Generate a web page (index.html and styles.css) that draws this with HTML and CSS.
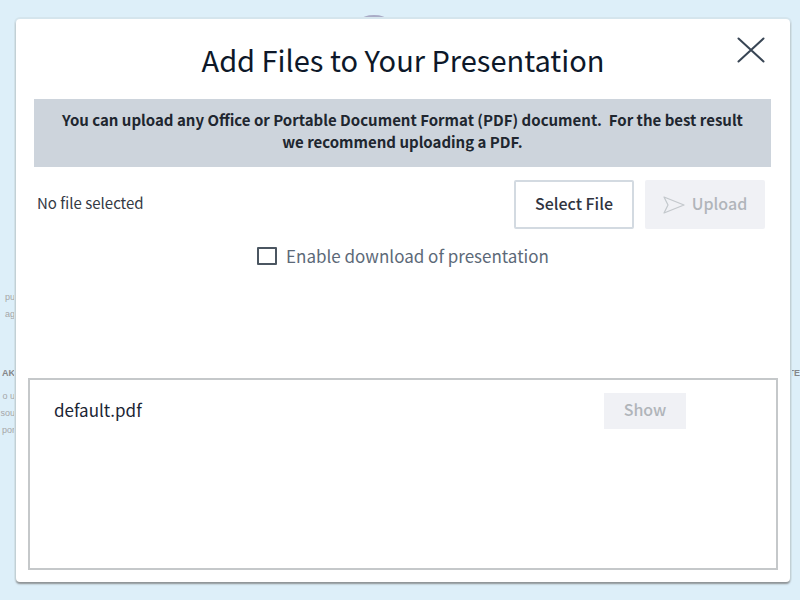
FILE: index.html
```
<!DOCTYPE html>
<html lang="en">
<head>
    <meta charset="utf-8">
    <meta name="viewport" content="width=device-width, initial-scale=1.0">
    <title>Add Files to Your Presentation</title>
    <link rel="stylesheet" href="styles.css">
</head>
<body>
<!-- page that shows behind the dialog -->
<div class="backdrop" aria-hidden="true">
    <span class="bump"></span>
    <div class="slide slide-left">
        <p>pu<br>ag</p>
        <h2>AK</h2>
        <p>o u<br>sou<br>por</p>
    </div>
    <div class="slide slide-right">
        <h2>TE</h2>
    </div>
</div>

<main class="modal" role="dialog" aria-labelledby="title">
    <header class="header">
        <h1 id="title">Add Files to Your Presentation</h1>
        <button class="close" type="button" aria-label="Close">
            <svg width="28" height="26" viewBox="0 0 28 26" fill="none" stroke="#384554" stroke-width="2" stroke-linecap="round">
                <path d="M1.5 1.5L26.5 24.5M26.5 1.5L1.5 24.5"/>
            </svg>
        </button>
    </header>

    <p class="notice">You can upload any Office or Portable Document Format (PDF) document.&nbsp; For the best result we recommend uploading a PDF.</p>

    <div class="picker">
        <span class="file-name">No file selected</span>
        <button class="btn select" type="button">Select File</button>
        <button class="btn upload" type="button" disabled>
            <svg width="22" height="18" viewBox="0 0 22 18" fill="none" stroke="#c3c8cc" stroke-width="1.2" stroke-linejoin="round">
                <path d="M1 1L21 9L1 17L5 9Z"/>
            </svg>
            Upload
        </button>
    </div>

    <label class="download">
        <input type="checkbox">
        Enable download of presentation
    </label>

    <ul class="files">
        <li class="file">
            <span class="name">default.pdf</span>
            <button class="btn show" type="button" disabled>Show</button>
        </li>
    </ul>
</main>
</body>
</html>
```

FILE: styles.css
```
* {
    box-sizing: border-box;
}

body {
    display: flex;
    min-height: 100vh;
    margin: 0;
    padding: 19px 10px 18px 16px;
    background-color: #ddeff9;
    font-family: "Noto Sans CJK SC", "Noto Sans", sans-serif;
    font-size: 17px;
    color: #1b2534;
}

h1, h2, p, ul {
    margin: 0;
    padding: 0;
}

button {
    font: inherit;
    cursor: pointer;
}

/* Page behind */
.backdrop {
    position: absolute;
    inset: 0;
    overflow: hidden;
    color: #a5a6a8;
    font-family: "Liberation Sans", Arial, sans-serif;
    font-size: 9px;
    line-height: 17px;
}

.bump {
    position: absolute;
    top: 15px;
    left: 361px;
    width: 26px;
    height: 10px;
    border-radius: 50%;
    background: #a9abc6;
}

.slide {
    position: absolute;
}

.slide-left {
    top: 289px;
    left: 0;
    width: 15px;
    text-align: right;
    white-space: nowrap;
}

.slide h2 {
    font-size: 9px;
    line-height: 17px;
    color: #85878a;
}

.slide-left h2 {
    margin: 42px 0 6px;
}

.slide-right {
    top: 365px;
    right: 0;
}

/* Dialog */
.modal {
    position: relative;
    display: flex;
    flex: 1;
    flex-direction: column;
    padding: 0 12px 12px;
    border-radius: 4px;
    background: #fff;
    box-shadow: 0 2px 2px #8e9396, 0 0 0 2px #d5e5ed;
}

.header {
    display: grid;
    grid-template-columns: 54px 1fr 54px;
    height: 80px;
    align-items: center;
}

h1 {
    grid-column: 2;
    font-size: 29px;
    font-weight: 400;
    line-height: 40px;
    text-align: center;
    color: #0d1829;
}

.close {
    display: flex;
    align-self: start;
    justify-self: center;
    margin-top: 18px;
    padding: 0;
    border: 0;
    background: none;
}

.notice {
    margin: 0 7px 0 6px;
    padding: 10px 16px 14px;
    background: #cdd4dc;
    font-size: 15px;
    font-weight: 700;
    line-height: 22px;
    text-align: center;
    color: #20262f;
}

.picker {
    display: flex;
    align-items: center;
    gap: 11px;
    margin: 13px 13px 0 9px;
}

.file-name {
    flex: 1;
    padding-bottom: 4px;
    font-size: 15px;
    color: #343a44;
}

.btn {
    display: flex;
    align-items: center;
    justify-content: center;
    gap: 7px;
    padding: 0 0 4px;
    border: 0;
    border-radius: 2px;
    font-size: 16px;
    font-weight: 500;
}

.btn svg {
    margin-top: 4px;
}

.btn:disabled {
    background: #f0f1f5;
    color: #b0b5ba;
    cursor: default;
}

.select,
.upload {
    width: 120px;
    height: 49px;
}

.select {
    border: 2px solid #d3dae1;
    background: #fff;
    color: #30343f;
}

.download {
    display: flex;
    align-items: center;
    align-self: center;
    gap: 9px;
    margin-top: 14px;
    line-height: 26px;
    color: #5c6978;
}

.download input {
    appearance: none;
    width: 20px;
    height: 18px;
    margin: 0;
    border: 2px solid #4b5661;
    border-radius: 1px;
}

.files {
    flex: 1;
    margin-top: 109px;
    padding: 13px 90px 13px 24px;
    border: 2px solid #c5c8ca;
    list-style: none;
}

.file {
    display: flex;
    align-items: center;
    justify-content: space-between;
}

.name {
    padding-bottom: 4px;
}

.show {
    width: 82px;
    height: 36px;
    border-radius: 0;
}
```
